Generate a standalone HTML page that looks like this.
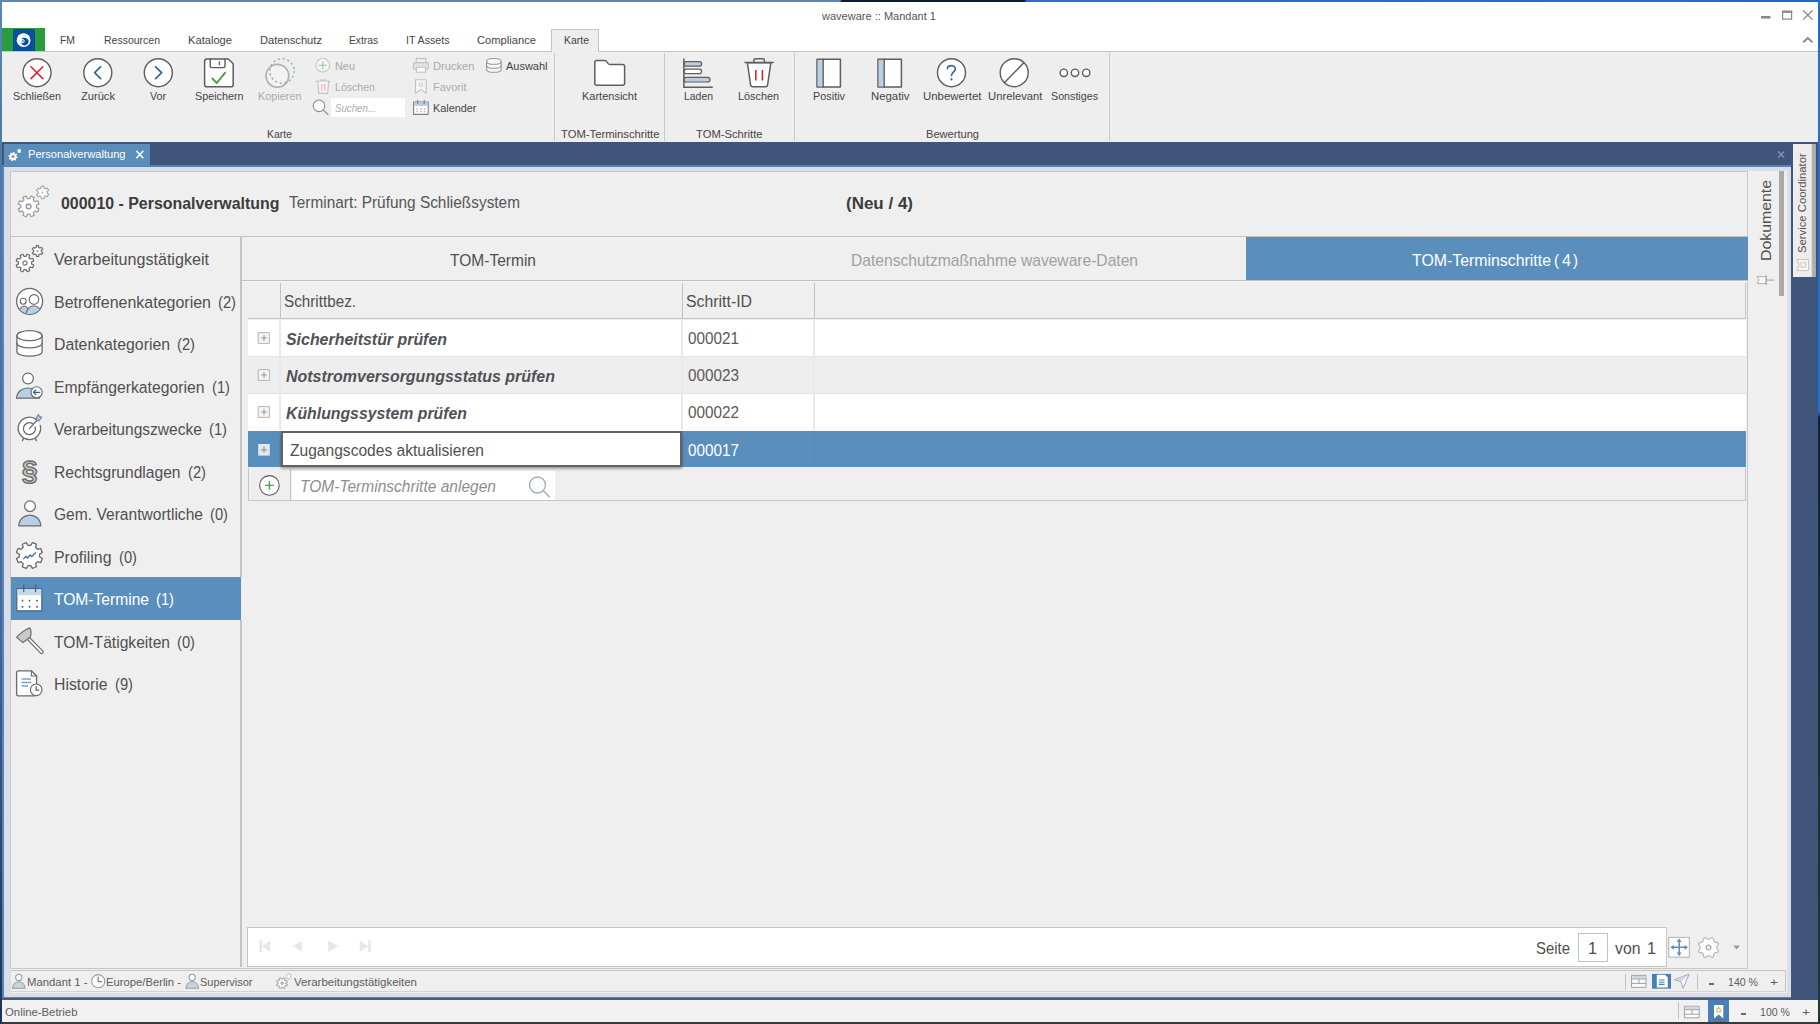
<!DOCTYPE html>
<html lang="de"><head><meta charset="utf-8"><title>waveware :: Mandant 1</title>
<style>
html,body{margin:0;padding:0;}
body{width:1820px;height:1024px;overflow:hidden;position:relative;background:#efefef;
 font-family:"Liberation Sans",sans-serif;}
.t{position:absolute;white-space:pre;line-height:1;display:block;}
.b{position:absolute;box-sizing:border-box;}
svg{position:absolute;overflow:visible;}
</style></head>
<body>
<!-- ===== window chrome ===== -->
<div class="b" style="left:0;top:0;width:1820px;height:52px;background:#ffffff"></div>
<div class="b" style="left:0;top:0;width:1820px;height:1.9px;background:linear-gradient(90deg,#5b86b5 0,#5b86b5 840px,#0d1b33 842px,#0d1b33 1024px,#2a6fd0 1027px,#1f69d0 100%)"></div>
<!-- logo -->
<div class="b" style="left:1.8px;top:28.3px;width:43.3px;height:23px;background:#2b9b3f"></div>
<div class="b" style="left:12.6px;top:28.6px;width:22.3px;height:22.7px;background:#08509e;border-radius:2px 2px 0 0"></div>
<!-- ribbon -->
<div class="b" style="left:0;top:52px;width:1820px;height:90px;background:#eeeeee"></div>
<div class="b" style="left:0;top:51px;width:1820px;height:1px;background:#c4c4c4"></div>
<!-- active menu tab -->
<div class="b" style="left:551px;top:29px;width:47.8px;height:23px;background:#eeeeee;border:1px solid #c4c4c4;border-bottom:none"></div>
<!-- ribbon group separators -->
<div class="b" style="left:554px;top:53px;width:1px;height:88px;background:#c9c9c9"></div>
<div class="b" style="left:664px;top:53px;width:1px;height:88px;background:#c9c9c9"></div>
<div class="b" style="left:794px;top:53px;width:1px;height:88px;background:#c9c9c9"></div>
<div class="b" style="left:1109px;top:53px;width:1px;height:88px;background:#c9c9c9"></div>
<!-- search box -->
<div class="b" style="left:330.5px;top:97.5px;width:74.5px;height:19.5px;background:#ffffff"></div>

<!-- ===== document area ===== -->
<div class="b" style="left:0;top:141.5px;width:1820px;height:858.1px;background:#40557a"></div>
<div class="b" style="left:2px;top:165px;width:1789px;height:834.6px;background:#3d5c8c"></div>
<div class="b" style="left:2px;top:165px;width:1789px;height:833px;background:#5585b6"></div>
<div class="b" style="left:3.5px;top:166.8px;width:1787.4px;height:830px;background:#dadfe7"></div>
<!-- document tab -->
<div class="b" style="left:4px;top:144px;width:146px;height:22px;background:#5b8dbb"></div>
<!-- inner -->
<div class="b" style="left:10px;top:171px;width:1776.5px;height:821.5px;background:#efefef"></div>
<!-- main panel -->
<div class="b" style="left:10px;top:171px;width:1738px;height:797.5px;border:1px solid #c6c6c6;background:#efefef"></div>
<div class="b" style="left:11px;top:236px;width:1736px;height:1px;background:#c2c2c2"></div>
<div class="b" style="left:240.4px;top:236px;width:1.4px;height:731px;background:#c4c4c4"></div>
<!-- selected nav -->
<div class="b" style="left:11px;top:577.2px;width:231px;height:42.4px;background:#5a8fbd;border-right:1px solid #efefef"></div>
<!-- tabs -->
<div class="b" style="left:242px;top:279.6px;width:1505px;height:1.2px;background:#c2c2c2"></div>
<div class="b" style="left:242px;top:280.8px;width:1505px;height:1.7px;background:#f6f4f2"></div>
<div class="b" style="left:1246px;top:236.5px;width:501.5px;height:43.1px;background:#5a8fbd"></div>

<!-- table -->
<div class="b" style="left:247.5px;top:282.5px;width:1498.5px;height:36.7px;border-bottom:1px solid #c6c6c6;border-right:1px solid #c6c6c6;background:#efefef"></div>
<div class="b" style="left:248px;top:320px;width:1498px;height:36px;background:#ffffff"></div>
<div class="b" style="left:248px;top:356px;width:1498px;height:1px;background:#e6e6e6"></div>
<div class="b" style="left:248px;top:357px;width:1498px;height:36.5px;background:#eeeeee"></div>
<div class="b" style="left:248px;top:393px;width:1498px;height:1px;background:#e2e2e2"></div>
<div class="b" style="left:248px;top:394px;width:1498px;height:36.5px;background:#ffffff"></div>
<div class="b" style="left:247.5px;top:430.5px;width:1498.5px;height:36.5px;background:#5a8fbd"></div>
<!-- column separators -->
<div class="b" style="left:279.5px;top:283px;width:1.5px;height:36px;background:#c2c2c2"></div>
<div class="b" style="left:681.5px;top:283px;width:1.5px;height:36px;background:#c2c2c2"></div>
<div class="b" style="left:813.5px;top:283px;width:1.5px;height:36px;background:#c2c2c2"></div>
<div class="b" style="left:279.4px;top:320px;width:1.6px;height:110px;background:#e9e9e9"></div>
<div class="b" style="left:681.2px;top:320px;width:1.6px;height:110px;background:#e9e9e9"></div>
<div class="b" style="left:813.2px;top:320px;width:1.6px;height:110px;background:#e9e9e9"></div>
<div class="b" style="left:814px;top:431px;width:1px;height:36px;background:#5388b6"></div>
<!-- add row -->
<div class="b" style="left:247.5px;top:468px;width:1498.5px;height:33px;border:1px solid #c6c6c6;border-top:none;background:#efefef"></div>
<div class="b" style="left:290px;top:469px;width:1px;height:32px;background:#c6c6c6"></div>
<div class="b" style="left:291.8px;top:471px;width:263.4px;height:29.2px;background:#ffffff"></div>

<!-- edit box -->
<div class="b" style="left:280.6px;top:431.4px;width:401px;height:35.2px;background:#ffffff;border:2px solid #626262;box-shadow:0 1.5px 3px rgba(0,0,0,.42)"></div>

<!-- pager -->
<div class="b" style="left:246.6px;top:927px;width:1420px;height:39.5px;border:1px solid #c6c6c6;background:#ffffff"></div>
<div class="b" style="left:1578.2px;top:933.1px;width:29.5px;height:29px;border:1px solid #c2c2c2;background:#ffffff"></div>

<!-- dokumente scroll thumb -->
<div class="b" style="left:1778.6px;top:171px;width:5.4px;height:125px;background:#a9a9a9"></div>

<!-- status bar 1 -->
<div class="b" style="left:10px;top:969.6px;width:1776px;height:22.4px;border:1px solid #c6c6c6;border-left-color:#dedede;border-bottom-color:#dccfcf;background:#efefef"></div>
<div class="b" style="left:1625px;top:974px;width:1px;height:16px;background:#c2c2c2"></div>
<div class="b" style="left:1697px;top:974px;width:1px;height:16px;background:#c2c2c2"></div>

<!-- service coordinator tab -->
<div class="b" style="left:1792.5px;top:144px;width:23.5px;height:133px;background:linear-gradient(90deg,#ededed 0,#ededed 79%,#b4b4b4 84%,#a8a8a8 100%)"></div>

<!-- bottom status bar -->
<div class="b" style="left:0;top:999.6px;width:1820px;height:22px;background:#f1f1f1"></div>
<div class="b" style="left:1677.5px;top:1002px;width:1px;height:17px;background:#c2c2c2"></div>
<div class="b" style="left:1708.4px;top:999.6px;width:20.6px;height:22.4px;background:#4a7fb5"></div>
<div class="b" style="left:0;top:1021.5px;width:1820px;height:2.5px;background:#3a3a3a"></div>

<div class="b" style="left:1708.6px;top:983px;width:5.2px;height:1.5px;background:#6a6a6a"></div>
<div class="b" style="left:1741px;top:1013.2px;width:4.8px;height:1.5px;background:#6a6a6a"></div>
<!-- window borders -->
<div class="b" style="left:0;top:0;width:1.9px;height:1024px;background:linear-gradient(180deg,#5b86b5 0,#4f79a6 140px,#46689a 60%,#223e66 90%,#1c3556 100%)"></div>
<div class="b" style="left:1817.5px;top:0;width:2.5px;height:1024px;background:linear-gradient(180deg,#2470d0 0,#2470d0 412px,#16242e 418px,#1b3a30 100%)"></div>

<svg width="1820" height="1024" viewBox="0 0 1820 1024" style="left:0;top:0" fill="none" stroke-linecap="round" stroke-linejoin="round">
<circle cx="23.6" cy="40.2" r="6.9" fill="#ffffff"/>
<path d="M21.2,39.2 C23.5,36.6 27.6,37.6 28.6,40.8 C28.9,43.4 26.8,45.6 24.2,45.4 C22.4,45.2 21.2,44 21.3,42.6 C23,43.8 25.2,42.6 24.6,40.6 C24,39 22.2,38.6 21.2,39.2Z" fill="#08509e"/>
<circle cx="22.8" cy="40.9" r="1.2" fill="#5aa9e6"/>
<rect x="1761" y="16" width="9.5" height="2.6" fill="#8a8a8a"/>
<rect x="1782.6" y="11.6" width="9" height="7.6" stroke="#8a8a8a" stroke-width="1.2"/><rect x="1782" y="10.5" width="10.2" height="2.4" fill="#8a8a8a"/>
<path d="M1803.4,10.8 L1812.2,19.4 M1812.2,10.8 L1803.4,19.4" stroke="#8a8a8a" stroke-width="1.3"/>
<path d="M1803.2,42.2 L1807.8,38 L1812.4,42.2" stroke="#8a8a8a" stroke-width="1.9" stroke-linejoin="miter" stroke-linecap="butt"/>
<circle cx="37" cy="72.7" r="14" fill="#fff" stroke="#5e5e5e" stroke-width="1.4"/>
<path d="M31,66.8 L42.8,78.6 M42.8,66.8 L31,78.6" stroke="#dc2633" stroke-width="1.6"/>
<circle cx="97.8" cy="72.7" r="14" fill="#fff" stroke="#5e5e5e" stroke-width="1.4"/>
<path d="M100.6,66.8 L94.6,72.7 L100.6,78.6" stroke="#2f6499" stroke-width="1.7"/>
<circle cx="158.3" cy="72.7" r="14" fill="#fff" stroke="#5e5e5e" stroke-width="1.4"/>
<path d="M155.6,66.8 L161.6,72.7 L155.6,78.6" stroke="#2f6499" stroke-width="1.7"/>
<path d="M206.8,59 H228.4 L233.2,63.8 V84.4 Q233.2,86.8 230.8,86.8 H206.8 Q204.6,86.8 204.6,84.4 V61.4 Q204.6,59 206.8,59Z" fill="#fff" stroke="#5e5e5e" stroke-width="1.5"/>
<path d="M210.2,59 V66 Q210.2,67.6 211.8,67.6 H223.4 Q225,67.6 225,66 V59" stroke="#5e5e5e" stroke-width="1.4"/>
<path d="M219.4,62 V64.6" stroke="#5e5e5e" stroke-width="1.4"/>
<path d="M212.4,78.6 L216.8,83 L225,72.8" stroke="#3fa535" stroke-width="1.9"/>
<circle cx="277.4" cy="75.8" r="11.4" fill="#f3f3f3" stroke="#b2b2b2" stroke-width="1.7"/>
<circle cx="282" cy="71" r="12.2" stroke="#9fadbd" stroke-width="1.5" stroke-dasharray="2.2 2.6" stroke-linecap="butt"/>
<circle cx="322.8" cy="65.3" r="6.8" fill="#f6f6f6" stroke="#c6c6c6" stroke-width="1.1"/>
<path d="M322.8,61.6 V69 M319.1,65.3 H326.5" stroke="#a4d3a0" stroke-width="1.3"/>
<path d="M316.6,81.4 H329.8 M320.6,81.4 V80 H325.8 V81.4" stroke="#c2c2c2" stroke-width="1.1"/>
<path d="M317.8,81.6 L318.8,93.4 H327.6 L328.6,81.6" fill="#f4f4f4" stroke="#c2c2c2" stroke-width="1.1"/>
<path d="M321.8,84.4 V90.4 M324.8,84.4 V90.4" stroke="#f0a3a8" stroke-width="1"/>
<circle cx="319" cy="105.8" r="5.8" fill="#fafafa" stroke="#8c8c8c" stroke-width="1.1"/>
<path d="M323.2,110 L328,114.4" stroke="#9a9a9a" stroke-width="1.4"/>
<rect x="416.2" y="58.6" width="9.6" height="4.4" fill="#f2f2f2" stroke="#c2c2c2" stroke-width="1.1"/>
<rect x="413.4" y="62.6" width="15" height="6.6" rx="1.2" fill="#e2e2e2" stroke="#c2c2c2" stroke-width="1.1"/>
<rect x="416.4" y="67.2" width="9.2" height="5" fill="#f8f8f8" stroke="#c2c2c2" stroke-width="1.1"/>
<path d="M415.4,79.8 H426.2 V93.2 L420.8,89.6 L415.4,93.2Z" fill="#f4f4f4" stroke="#c2c2c2" stroke-width="1.1"/>
<circle cx="420.8" cy="84.6" r="1.9" stroke="#c9c9c9" stroke-width="1"/>
<rect x="413.6" y="102" width="14.6" height="12.4" fill="#fff" stroke="#7c8289" stroke-width="1.1"/>
<rect x="414.2" y="102.6" width="13.4" height="3.4" fill="#b9cde0"/>
<path d="M417.6,100.2 V103.4 M424.2,100.2 V103.4" stroke="#7c8289" stroke-width="1.1"/>
<path d="M416.4,109 H418 M420.1,109 H421.7 M423.8,109 H425.4 M416.4,111.8 H418 M420.1,111.8 H421.7 M423.8,111.8 H425.4" stroke="#8da0b4" stroke-width="1.1" stroke-linecap="butt"/>
<path d="M486.6,61.4 V69.4 C486.6,73.2 501.2,73.2 501.2,69.4 V61.4" fill="#f8f8f8" stroke="#989898" stroke-width="1.1"/>
<ellipse cx="493.9" cy="61.4" rx="7.3" ry="2.9" fill="#f8f8f8" stroke="#989898" stroke-width="1.1"/>
<path d="M486.6,65.4 C486.6,69.2 501.2,69.2 501.2,65.4" stroke="#989898" stroke-width="1.1"/>
<path d="M596.8,60.4 H604.6 Q606,60.4 606.8,61.6 L608.2,63.6 Q608.8,64.4 610,64.4 H622.6 Q624.6,64.4 624.6,66.4 V83.2 Q624.6,85.2 622.6,85.2 H596.8 Q594.8,85.2 594.8,83.2 V62.4 Q594.8,60.4 596.8,60.4Z" fill="#fff" stroke="#5e5e5e" stroke-width="1.5"/>
<rect x="684" y="61.6" width="17.6" height="4.6" rx="2.2" fill="#b9cfe3" stroke="#5e5e5e" stroke-width="1.2"/>
<rect x="684" y="69.2" width="17.6" height="4.4" rx="2.2" fill="#fff" stroke="#5e5e5e" stroke-width="1.2"/>
<rect x="684" y="77.4" width="26" height="4.6" rx="2.2" fill="#b9cfe3" stroke="#5e5e5e" stroke-width="1.2"/>
<path d="M683.9,58.6 V87.2 H712.8" stroke="#5e5e5e" stroke-width="1.5" stroke-linecap="butt" stroke-linejoin="miter"/>
<path d="M747.4,62.8 L750.6,84.8 Q750.9,86.8 752.8,86.8 H765.4 Q767.3,86.8 767.6,84.8 L770.8,62.8Z" fill="#fff" stroke="#5e5e5e" stroke-width="1.5"/>
<path d="M745,62.6 H773.2 M753.8,62.4 V60.4 Q753.8,58.8 755.4,58.8 H762.8 Q764.4,58.8 764.4,60.4 V62.4" stroke="#5e5e5e" stroke-width="1.5"/>
<path d="M755.8,70 V80.4 M762.4,70 V80.4" stroke="#dc2633" stroke-width="1.6" stroke-linecap="butt"/>
<rect x="817" y="59.2" width="23.4" height="27.8" fill="#fff" stroke="#5e5e5e" stroke-width="1.5"/>
<rect x="817.7" y="59.9" width="5.2" height="26.4" fill="#b9cfe3"/><path d="M823.2,59.2 V87" stroke="#5e5e5e" stroke-width="1.4"/>
<rect x="878" y="59.2" width="23.4" height="27.8" fill="#fff" stroke="#5e5e5e" stroke-width="1.5"/>
<rect x="878.7" y="59.9" width="5.2" height="26.4" fill="#b9cfe3"/><path d="M884.2,59.2 V87" stroke="#5e5e5e" stroke-width="1.4"/>
<circle cx="951.5" cy="72.7" r="14" fill="#fff" stroke="#5e5e5e" stroke-width="1.4"/>
<path d="M947.4,68.8 C947.6,64.6 955.6,64.6 955.4,69 C955.2,71.8 951.5,72 951.5,75.6" stroke="#2f6499" stroke-width="1.6"/><circle cx="951.5" cy="79.4" r="1.1" fill="#2f6499"/>
<circle cx="1014.2" cy="72.7" r="14" fill="#fff" stroke="#5e5e5e" stroke-width="1.4"/>
<path d="M1004.6,82.6 L1023.8,62.8" stroke="#5e5e5e" stroke-width="1.5"/>
<circle cx="1063.8" cy="72.8" r="3.7" fill="#fff" stroke="#5e5e5e" stroke-width="1.4"/>
<circle cx="1075" cy="72.8" r="3.7" fill="#fff" stroke="#5e5e5e" stroke-width="1.4"/>
<circle cx="1086.2" cy="72.8" r="3.7" fill="#fff" stroke="#5e5e5e" stroke-width="1.4"/>
<path d="M16.44,155.93 L16.50,156.42 L17.60,156.80 L17.31,158.21 L16.15,158.13 L15.90,158.56 L15.60,158.94 L16.11,159.99 L14.91,160.78 L14.15,159.91 L13.67,160.04 L13.18,160.10 L12.80,161.20 L11.39,160.91 L11.47,159.75 L11.04,159.50 L10.66,159.20 L9.61,159.71 L8.82,158.51 L9.69,157.75 L9.56,157.27 L9.50,156.78 L8.40,156.40 L8.69,154.99 L9.85,155.07 L10.10,154.64 L10.40,154.26 L9.89,153.21 L11.09,152.42 L11.85,153.29 L12.33,153.16 L12.82,153.10 L13.20,152.00 L14.61,152.29 L14.53,153.45 L14.96,153.70 L15.34,154.00 L16.39,153.49 L17.18,154.69 L16.31,155.45Z" fill="#fff"/>
<circle cx="13" cy="156.6" r="1.5" fill="#b9826e"/>
<circle cx="19.2" cy="151" r="1.9" fill="#fff"/>
<path d="M136.7,151.2 L142.9,157.8 M142.9,151.2 L136.7,157.8" stroke="#fff" stroke-width="1.5"/>
<path d="M1778.4,151.8 L1783.8,157.4 M1783.8,151.8 L1778.4,157.4" stroke="#8b98b0" stroke-width="1.3"/>
<path d="M36.40,206.38 L36.33,207.48 L38.91,208.85 L37.65,211.91 L34.85,211.07 L34.13,211.90 L33.30,212.62 L34.16,215.42 L31.10,216.70 L29.72,214.12 L28.62,214.20 L27.52,214.13 L26.15,216.71 L23.09,215.45 L23.93,212.65 L23.10,211.93 L22.38,211.10 L19.58,211.96 L18.30,208.90 L20.88,207.52 L20.80,206.42 L20.87,205.32 L18.29,203.95 L19.55,200.89 L22.35,201.73 L23.07,200.90 L23.90,200.18 L23.04,197.38 L26.10,196.10 L27.48,198.68 L28.58,198.60 L29.68,198.67 L31.05,196.09 L34.11,197.35 L33.27,200.15 L34.10,200.87 L34.82,201.70 L37.62,200.84 L38.90,203.90 L36.32,205.28Z" fill="#fff" stroke="#9a9a9a" stroke-width="1.2"/>
<circle cx="28.6" cy="206.4" r="2.3" stroke="#93a3b6" stroke-width="1.6"/>
<path d="M47.10,192.29 L47.04,193.14 L48.73,194.23 L47.46,196.57 L45.62,195.74 L44.94,196.24 L44.18,196.61 L44.08,198.63 L41.42,198.69 L41.22,196.68 L40.44,196.35 L39.74,195.87 L37.95,196.79 L36.56,194.52 L38.20,193.35 L38.10,192.51 L38.16,191.66 L36.47,190.57 L37.74,188.23 L39.58,189.06 L40.26,188.56 L41.02,188.19 L41.12,186.17 L43.78,186.11 L43.98,188.12 L44.76,188.45 L45.46,188.93 L47.25,188.01 L48.64,190.28 L47.00,191.45Z" fill="#fff" stroke="#a6a6a6" stroke-width="1.1"/>
<circle cx="42.6" cy="192.4" r="1" fill="#a7b4c4"/>
<path d="M31.60,262.98 L31.54,263.91 L33.76,265.08 L32.69,267.68 L30.29,266.95 L29.68,267.65 L28.98,268.27 L29.72,270.66 L27.12,271.75 L25.95,269.53 L25.02,269.60 L24.09,269.54 L22.92,271.76 L20.32,270.69 L21.05,268.29 L20.35,267.68 L19.73,266.98 L17.34,267.72 L16.25,265.12 L18.47,263.95 L18.40,263.02 L18.46,262.09 L16.24,260.92 L17.31,258.32 L19.71,259.05 L20.32,258.35 L21.02,257.73 L20.28,255.34 L22.88,254.25 L24.05,256.47 L24.98,256.40 L25.91,256.46 L27.08,254.24 L29.68,255.31 L28.95,257.71 L29.65,258.32 L30.27,259.02 L32.66,258.28 L33.75,260.88 L31.53,262.05Z" fill="#fff" stroke="#6a6a6a" stroke-width="1.2"/>
<circle cx="25" cy="263" r="2" stroke="#7f8c9c" stroke-width="1.4"/>
<path d="M41.30,250.91 L41.25,251.62 L42.77,252.58 L41.67,254.58 L40.05,253.82 L39.48,254.25 L38.83,254.56 L38.77,256.35 L36.48,256.41 L36.34,254.62 L35.68,254.33 L35.09,253.93 L33.50,254.78 L32.31,252.82 L33.79,251.80 L33.70,251.09 L33.75,250.38 L32.23,249.42 L33.33,247.42 L34.95,248.18 L35.52,247.75 L36.17,247.44 L36.23,245.65 L38.52,245.59 L38.66,247.38 L39.32,247.67 L39.91,248.07 L41.50,247.22 L42.69,249.18 L41.21,250.20Z" fill="#fff" stroke="#6a6a6a" stroke-width="1.1"/>
<circle cx="37.5" cy="251" r="0.9" fill="#7f8c9c"/>
<clipPath id="cb"><circle cx="29.6" cy="301.3" r="12.6"/></clipPath>
<circle cx="29.6" cy="301.3" r="13" fill="#fff" stroke="#6a6a6a" stroke-width="1.3"/>
<g clip-path="url(#cb)"><path d="M18.6,316 C18.6,302.6 29.6,302.6 29.6,316Z" fill="#b9cfe3" stroke="#6a6a6a" stroke-width="1.1"/><path d="M26,316 C26,302.4 41.6,302.4 41.6,316Z" fill="#b9cfe3" stroke="#6a6a6a" stroke-width="1.1"/></g>
<circle cx="23.2" cy="301.2" r="3" fill="#fff" stroke="#6a6a6a" stroke-width="1.1"/><circle cx="34" cy="299.4" r="4.8" fill="#fff" stroke="#6a6a6a" stroke-width="1.1"/>
<path d="M16.9,335.7 V351.4 C16.9,357.8 42.1,357.8 42.1,351.4 V335.7" fill="#fff" stroke="#6a6a6a" stroke-width="1.3"/>
<ellipse cx="29.5" cy="335.7" rx="12.6" ry="5" fill="#fff" stroke="#6a6a6a" stroke-width="1.3"/>
<path d="M16.9,343 C16.9,349.4 42.1,349.4 42.1,343" stroke="#6a6a6a" stroke-width="1.3"/>
<circle cx="28" cy="378.5" r="5.4" fill="#fff" stroke="#6a6a6a" stroke-width="1.2"/>
<path d="M16.6,398.2 C17.6,384.6 38.4,384.6 39.4,398.2Z" fill="#b9cfe3" stroke="#6a6a6a" stroke-width="1.2"/>
<circle cx="36.6" cy="392.3" r="5.6" fill="#fff" stroke="#6a6a6a" stroke-width="1.1"/>
<path d="M39.8,392.3 H33.6 M35.8,390 L33.4,392.3 L35.8,394.6" stroke="#2f6499" stroke-width="1.2"/>
<path d="M36.4,419.6 A11.2,11.2 0 1 0 40.2,425.4" fill="#fff" stroke="#6a6a6a" stroke-width="1.3"/>
<path d="M32.4,423.4 A6,6 0 1 0 35.2,427" stroke="#6a6a6a" stroke-width="1.3"/>
<path d="M29.4,428.6 L38,419.2" stroke="#6a6a6a" stroke-width="1.3"/>
<path d="M36.2,417.6 L38.6,414.2 L39.4,416.6 L41.8,417 L39.4,420.8 L36.8,420.6Z" fill="#a9c3dc" stroke="#6a6a6a" stroke-width="0.9"/>
<path d="M23.4,438.6 L22.4,440.6 M35.4,438.6 L36.4,440.6" stroke="#6a6a6a" stroke-width="1.3"/>
<circle cx="30" cy="506.2" r="5.4" fill="#fff" stroke="#6a6a6a" stroke-width="1.2"/>
<path d="M18.8,525.8 C19.6,511.6 40,511.6 40.8,525.8Z" fill="#b9cfe3" stroke="#6a6a6a" stroke-width="1.3"/>
<path d="M39.60,555.47 L39.51,556.83 L42.36,558.47 L40.70,562.51 L37.53,561.67 L36.63,562.69 L35.61,563.59 L36.47,566.77 L32.44,568.45 L30.79,565.61 L29.43,565.70 L28.07,565.61 L26.43,568.46 L22.39,566.80 L23.23,563.63 L22.21,562.73 L21.31,561.71 L18.13,562.57 L16.45,558.54 L19.29,556.89 L19.20,555.53 L19.29,554.17 L16.44,552.53 L18.10,548.49 L21.27,549.33 L22.17,548.31 L23.19,547.41 L22.33,544.23 L26.36,542.55 L28.01,545.39 L29.37,545.30 L30.73,545.39 L32.37,542.54 L36.41,544.20 L35.57,547.37 L36.59,548.27 L37.49,549.29 L40.67,548.43 L42.35,552.46 L39.51,554.11Z" fill="#fff" stroke="#6a6a6a" stroke-width="1.3"/>
<path d="M23.6,558.6 L26,556.2 L27.6,558 L30.2,555 L31.8,556.6 L35.6,552.8" stroke="#2f6da8" stroke-width="1.3"/>
<rect x="16.8" y="588.6" width="25" height="22.2" fill="#fff" stroke="#46648a" stroke-width="1.2"/>
<rect x="17.4" y="589.2" width="23.8" height="6" fill="#c5d8ea"/>
<path d="M23.7,584.8 V591.6 M35.6,584.8 V591.6" stroke="#46648a" stroke-width="1.3"/>
<rect x="21.599999999999998" y="599.8000000000001" width="1.7" height="1.7" fill="#46648a"/>
<rect x="28.7" y="599.8000000000001" width="1.7" height="1.7" fill="#46648a"/>
<rect x="36.1" y="599.8000000000001" width="1.7" height="1.7" fill="#46648a"/>
<rect x="21.599999999999998" y="606.0" width="1.7" height="1.7" fill="#46648a"/>
<rect x="28.7" y="606.0" width="1.7" height="1.7" fill="#46648a"/>
<rect x="36.1" y="606.0" width="1.7" height="1.7" fill="#46648a"/>
<path d="M28.4,638.4 L41.6,652" stroke="#6a6a6a" stroke-width="4.2"/><path d="M28.4,638.4 L41.6,652" stroke="#fafafa" stroke-width="1.9"/>
<path d="M16.6,637.4 C20,633.6 25.4,629.6 29.8,627.8 C31.2,629.2 31.4,634.2 30.2,637.2 L23,642.6Z" fill="#c9c9c9" stroke="#6a6a6a" stroke-width="1.2"/>
<path d="M18.4,670.8 H31.4 L36.6,676 V693.6 Q36.6,695.8 34.4,695.8 H18.4 Q16.6,695.8 16.6,693.8 V672.8 Q16.6,670.8 18.4,670.8Z" fill="#fff" stroke="#6a6a6a" stroke-width="1.3"/>
<path d="M31.4,670.8 V676 H36.6" stroke="#6a6a6a" stroke-width="1.1"/>
<path d="M21.6,679 H31 M21.6,682.5 H31 M21.6,686 H28" stroke="#77a2cc" stroke-width="1.4" stroke-linecap="butt"/>
<circle cx="36.2" cy="689.8" r="5.8" fill="#fff" stroke="#6a6a6a" stroke-width="1.2"/>
<path d="M36.2,686.6 V690.2 H38.8" stroke="#3d6fa3" stroke-width="1.3"/>
<rect x="258.6" y="332.6" width="10.8" height="10.8" fill="#f4f4f4" stroke="#b4b4b4" stroke-width="1"/>
<path d="M261.2,338 H266.8 M264,335.2 V340.8" stroke="#9c9c9c" stroke-width="1.2" stroke-linecap="butt"/>
<rect x="258.6" y="369.6" width="10.8" height="10.8" fill="#f4f4f4" stroke="#b4b4b4" stroke-width="1"/>
<path d="M261.2,375 H266.8 M264,372.2 V377.8" stroke="#9c9c9c" stroke-width="1.2" stroke-linecap="butt"/>
<rect x="258.6" y="406.6" width="10.8" height="10.8" fill="#f4f4f4" stroke="#b4b4b4" stroke-width="1"/>
<path d="M261.2,412 H266.8 M264,409.2 V414.8" stroke="#9c9c9c" stroke-width="1.2" stroke-linecap="butt"/>
<rect x="258.2" y="444.0" width="11.6" height="11.6" fill="#e3e8ee"/>
<path d="M261,449.8 H267 M264,446.8 V452.8" stroke="#9a9a9a" stroke-width="1.3" stroke-linecap="butt"/>
<circle cx="269.4" cy="485.4" r="9.8" fill="#fff" stroke="#5a5a5a" stroke-width="1.1"/>
<path d="M269.4,481 V489.8 M265,485.4 H273.8" stroke="#4aa84a" stroke-width="1.4" stroke-linecap="butt"/>
<circle cx="537.5" cy="485" r="8" fill="#fbfcfd" stroke="#a4adb6" stroke-width="1.4"/>
<path d="M543.4,490.8 L549.2,496.6" stroke="#b0b0b0" stroke-width="1.6"/>
<path d="M259.4,940.4 H261.9 V952 H259.4Z M270.2,940.4 V952 L261.9,946.2Z" fill="#e7e7e7"/>
<path d="M301.8,940.6 V951.8 L293,946.2Z" fill="#e7e7e7"/>
<path d="M328.2,940.6 V951.8 L338.4,946.2Z" fill="#e7e7e7"/>
<path d="M359.8,940.4 V952 L368.2,946.2Z M368.2,940.4 H370.8 V952 H368.2Z" fill="#e7e7e7"/>
<rect x="1669.1" y="937.4" width="20.2" height="19.8" fill="#fdfdfd" stroke="#b2b2b2" stroke-width="1"/>
<path d="M1679.2,939.6 V955.2 M1671.6,947.3 H1687" stroke="#5b8dbb" stroke-width="1.5" stroke-linecap="butt"/>
<path d="M1679.2,938.6 L1681.6,942 H1676.8Z M1679.2,956 L1681.6,952.6 H1676.8Z M1670.4,947.3 L1673.8,944.9 V949.7Z M1688,947.3 L1684.6,944.9 V949.7Z" fill="#5b8dbb"/>
<path d="M1718.49,951.61 C1718.09,952.57 1715.29,952.31 1714.31,953.28 C1713.34,954.26 1713.63,957.06 1712.66,957.47 C1711.69,957.87 1709.90,955.70 1708.52,955.70 C1707.14,955.70 1705.36,957.89 1704.39,957.49 C1703.43,957.09 1703.69,954.29 1702.72,953.31 C1701.74,952.34 1698.94,952.63 1698.53,951.66 C1698.13,950.69 1700.30,948.90 1700.30,947.52 C1700.30,946.14 1698.11,944.36 1698.51,943.39 C1698.91,942.43 1701.71,942.69 1702.69,941.72 C1703.66,940.74 1703.37,937.94 1704.34,937.53 C1705.31,937.13 1707.10,939.30 1708.48,939.30 C1709.86,939.30 1711.64,937.11 1712.61,937.51 C1713.57,937.91 1713.31,940.71 1714.28,941.69 C1715.26,942.66 1718.06,942.37 1718.47,943.34 C1718.87,944.31 1716.70,946.10 1716.70,947.48 C1716.70,948.86 1718.89,950.64 1718.49,951.61Z" fill="#fdfdfd" stroke="#bcbcbc" stroke-width="1.3"/>
<circle cx="1708.5" cy="947.5" r="2.3" stroke="#a9b5c4" stroke-width="1.5"/>
<path d="M1733.2,945.4 H1740 L1736.6,949.4Z" fill="#9a9a9a"/>
<path d="M1757.4,276.6 H1766 V283.6 H1757.4 L1758.8,280.1Z" fill="#f8f8f8" stroke="#b0b0b0" stroke-width="1"/><path d="M1766,280.1 H1774" stroke="#b0b0b0" stroke-width="1.2"/><path d="M1766.4,275.6 V284.6" stroke="#b0b0b0" stroke-width="1.2"/>
<path d="M1797.2,259.6 H1808.6 V270.6 H1797.2 L1799,265.1Z" fill="#f6f6f6" stroke="#c4c4c4" stroke-width="1"/><rect x="1801.4" y="262.6" width="4.2" height="4.6" stroke="#d2c79a" stroke-width="0.9"/>
<circle cx="18.8" cy="977.4" r="3.1" fill="#fafafa" stroke="#9c9c9c" stroke-width="1.1"/>
<path d="M12.4,988.2 C13.0,979.6 24.6,979.6 25.200000000000003,988.2Z" fill="#c3d3e0" stroke="#9c9c9c" stroke-width="1.1"/>
<circle cx="192.2" cy="977.4" r="3.1" fill="#fafafa" stroke="#9c9c9c" stroke-width="1.1"/>
<path d="M185.79999999999998,988.2 C186.39999999999998,979.6 198.0,979.6 198.6,988.2Z" fill="#c3d3e0" stroke="#9c9c9c" stroke-width="1.1"/>
<circle cx="98.2" cy="981.2" r="6.6" fill="#fafafa" stroke="#9c9c9c" stroke-width="1.1"/><path d="M98.2,977.2 V981.6 H101.6" stroke="#858585" stroke-width="1.3"/>
<path d="M286.00,983.19 L285.96,983.75 L287.45,984.49 L286.78,986.11 L285.21,985.59 L284.84,986.02 L284.41,986.39 L284.94,987.97 L283.32,988.64 L282.57,987.16 L282.01,987.20 L281.45,987.16 L280.71,988.65 L279.09,987.98 L279.61,986.41 L279.18,986.04 L278.81,985.61 L277.23,986.14 L276.56,984.52 L278.04,983.77 L278.00,983.21 L278.04,982.65 L276.55,981.91 L277.22,980.29 L278.79,980.81 L279.16,980.38 L279.59,980.01 L279.06,978.43 L280.68,977.76 L281.43,979.24 L281.99,979.20 L282.55,979.24 L283.29,977.75 L284.91,978.42 L284.39,979.99 L284.82,980.36 L285.19,980.79 L286.77,980.26 L287.44,981.88 L285.96,982.63Z" fill="#fafafa" stroke="#9c9c9c" stroke-width="1"/>
<circle cx="282" cy="983.2" r="1.2" stroke="#9c9c9c" stroke-width="1"/>
<path d="M290.60,976.35 L290.57,976.73 L291.47,977.26 L290.88,978.35 L289.94,977.88 L289.64,978.11 L289.30,978.27 L289.29,979.32 L288.05,979.35 L287.99,978.30 L287.64,978.16 L287.33,977.94 L286.42,978.46 L285.77,977.39 L286.64,976.82 L286.60,976.45 L286.63,976.07 L285.73,975.54 L286.32,974.45 L287.26,974.92 L287.56,974.69 L287.90,974.53 L287.91,973.48 L289.15,973.45 L289.21,974.50 L289.56,974.64 L289.87,974.86 L290.78,974.34 L291.43,975.41 L290.56,975.98Z" fill="#fafafa" stroke="#c2c2c2" stroke-width="0.9"/>
<rect x="1632" y="975.4" width="14" height="12" fill="#fcfcfc" stroke="#a0a0a0" stroke-width="1"/>
<rect x="1632.5" y="975.9" width="13" height="2.6" fill="#c9d8e6"/>
<path d="M1632,979.0 H1646 M1632,983.4 H1646 M1639.0,979.0 V983.4" stroke="#a0a0a0" stroke-width="1" stroke-linecap="butt"/>
<rect x="1652" y="973.9" width="19" height="14.8" fill="#4a7fb5"/>
<path d="M1656.8,974.8 H1665 L1667.8,977.4 V987.6 H1656.8Z" fill="#fff"/>
<path d="M1659,980 H1664.6 M1659,982.2 H1664.6 M1659,984.4 H1664.6" stroke="#4a7fb5" stroke-width="1.1" stroke-linecap="butt"/>
<path d="M1674.8,979.6 L1689,974.2 L1683.2,988.4 L1681,982 Z" fill="#f7f7f7" stroke="#a6a6a6" stroke-width="1"/><path d="M1675.8,979.6 L1688,975 L1681.2,981.8Z" fill="#c9dbea"/>
<rect x="1684.8" y="1006.2" width="14.4" height="11.6" fill="#fcfcfc" stroke="#a0a0a0" stroke-width="1"/>
<rect x="1685.3" y="1006.7" width="13.4" height="2.6" fill="#c9d8e6"/>
<path d="M1684.8,1009.8000000000001 H1699.2 M1684.8,1014.2 H1699.2 M1692.0,1009.8000000000001 V1014.2" stroke="#a0a0a0" stroke-width="1" stroke-linecap="butt"/>
<path d="M1714,1005 H1723.3 V1018.4 L1718.65,1014.6 L1714,1018.4Z" fill="#fff"/>
<path d="M1718.65,1007.2 L1719.5,1009 L1721.4,1009.2 L1720,1010.5 L1720.4,1012.4 L1718.65,1011.4 L1716.9,1012.4 L1717.3,1010.5 L1715.9,1009.2 L1717.8,1009Z" stroke="#c9a64a" stroke-width="0.9"/>
<text x="29.8" y="480.4" text-anchor="middle" font-family="Liberation Sans, sans-serif" font-size="28.5" font-weight="700" fill="#cfcfcf" stroke="#707070" stroke-width="1.5">§</text>
</svg>
<span class="t" style="left:822px;top:10.84px;font-size:11.8px;font-weight:400;font-style:normal;color:#555;transform-origin:0 0;transform:scaleX(0.9347);">waveware :: Mandant 1</span>
<span class="t" style="left:60px;top:35.04px;font-size:11.8px;font-weight:400;font-style:normal;color:#444444;transform-origin:0 0;transform:scaleX(0.8799);">FM</span>
<span class="t" style="left:104px;top:35.04px;font-size:11.8px;font-weight:400;font-style:normal;color:#444444;transform-origin:0 0;transform:scaleX(0.8896);">Ressourcen</span>
<span class="t" style="left:188px;top:35.04px;font-size:11.8px;font-weight:400;font-style:normal;color:#444444;transform-origin:0 0;transform:scaleX(0.9446);">Kataloge</span>
<span class="t" style="left:260px;top:35.04px;font-size:11.8px;font-weight:400;font-style:normal;color:#444444;transform-origin:0 0;transform:scaleX(0.9454);">Datenschutz</span>
<span class="t" style="left:349px;top:35.04px;font-size:11.8px;font-weight:400;font-style:normal;color:#444444;transform-origin:0 0;transform:scaleX(0.8673);">Extras</span>
<span class="t" style="left:405.5px;top:35.04px;font-size:11.8px;font-weight:400;font-style:normal;color:#444444;transform-origin:0 0;transform:scaleX(0.9004);">IT Assets</span>
<span class="t" style="left:477px;top:35.04px;font-size:11.8px;font-weight:400;font-style:normal;color:#444444;transform-origin:0 0;transform:scaleX(0.9471);">Compliance</span>
<span class="t" style="left:564px;top:35.04px;font-size:11.8px;font-weight:400;font-style:normal;color:#444444;transform-origin:0 0;transform:scaleX(0.8864);">Karte</span>
<span class="t" style="left:13px;top:91.24px;font-size:11.8px;font-weight:400;font-style:normal;color:#444444;transform-origin:0 0;transform:scaleX(0.9148);">Schließen</span>
<span class="t" style="left:80.5px;top:91.24px;font-size:11.8px;font-weight:400;font-style:normal;color:#444444;transform-origin:0 0;transform:scaleX(0.9428);">Zurück</span>
<span class="t" style="left:150px;top:91.24px;font-size:11.8px;font-weight:400;font-style:normal;color:#444444;transform-origin:0 0;transform:scaleX(0.9030);">Vor</span>
<span class="t" style="left:194.5px;top:91.24px;font-size:11.8px;font-weight:400;font-style:normal;color:#444444;transform-origin:0 0;transform:scaleX(0.9129);">Speichern</span>
<span class="t" style="left:257.5px;top:91.24px;font-size:11.8px;font-weight:400;font-style:normal;color:#ababab;transform-origin:0 0;transform:scaleX(0.9209);">Kopieren</span>
<span class="t" style="left:582px;top:91.24px;font-size:11.8px;font-weight:400;font-style:normal;color:#444444;transform-origin:0 0;transform:scaleX(0.9320);">Kartensicht</span>
<span class="t" style="left:684px;top:91.24px;font-size:11.8px;font-weight:400;font-style:normal;color:#444444;transform-origin:0 0;transform:scaleX(0.8838);">Laden</span>
<span class="t" style="left:738px;top:91.24px;font-size:11.8px;font-weight:400;font-style:normal;color:#444444;transform-origin:0 0;transform:scaleX(0.9191);">Löschen</span>
<span class="t" style="left:812.5px;top:91.24px;font-size:11.8px;font-weight:400;font-style:normal;color:#444444;transform-origin:0 0;transform:scaleX(0.9209);">Positiv</span>
<span class="t" style="left:870.5px;top:91.24px;font-size:11.8px;font-weight:400;font-style:normal;color:#444444;transform-origin:0 0;transform:scaleX(0.9625);">Negativ</span>
<span class="t" style="left:922.5px;top:91.24px;font-size:11.8px;font-weight:400;font-style:normal;color:#444444;transform-origin:0 0;transform:scaleX(0.9697);">Unbewertet</span>
<span class="t" style="left:987.5px;top:91.24px;font-size:11.8px;font-weight:400;font-style:normal;color:#444444;transform-origin:0 0;transform:scaleX(0.9551);">Unrelevant</span>
<span class="t" style="left:1051px;top:91.24px;font-size:11.8px;font-weight:400;font-style:normal;color:#444444;transform-origin:0 0;transform:scaleX(0.9071);">Sonstiges</span>
<span class="t" style="left:335px;top:60.84px;font-size:11.8px;font-weight:400;font-style:normal;color:#ababab;transform-origin:0 0;transform:scaleX(0.9235);">Neu</span>
<span class="t" style="left:335px;top:81.84px;font-size:11.8px;font-weight:400;font-style:normal;color:#ababab;transform-origin:0 0;transform:scaleX(0.8967);">Löschen</span>
<span class="t" style="left:335px;top:102.84px;font-size:11.8px;font-weight:400;font-style:italic;color:#ababab;transform-origin:0 0;transform:scaleX(0.8226);">Suchen...</span>
<span class="t" style="left:432.5px;top:60.84px;font-size:11.8px;font-weight:400;font-style:normal;color:#ababab;transform-origin:0 0;transform:scaleX(0.9445);">Drucken</span>
<span class="t" style="left:432.5px;top:81.84px;font-size:11.8px;font-weight:400;font-style:normal;color:#ababab;transform-origin:0 0;transform:scaleX(0.9289);">Favorit</span>
<span class="t" style="left:432.5px;top:102.84px;font-size:11.8px;font-weight:400;font-style:normal;color:#444444;transform-origin:0 0;transform:scaleX(0.9209);">Kalender</span>
<span class="t" style="left:505.5px;top:60.84px;font-size:11.8px;font-weight:400;font-style:normal;color:#444444;transform-origin:0 0;transform:scaleX(0.9306);">Auswahl</span>
<span class="t" style="left:267px;top:129.14px;font-size:11.8px;font-weight:400;font-style:normal;color:#444444;transform-origin:0 0;transform:scaleX(0.8864);">Karte</span>
<span class="t" style="left:560.5px;top:129.14px;font-size:11.8px;font-weight:400;font-style:normal;color:#444444;transform-origin:0 0;transform:scaleX(0.9531);">TOM-Terminschritte</span>
<span class="t" style="left:696px;top:129.14px;font-size:11.8px;font-weight:400;font-style:normal;color:#444444;transform-origin:0 0;transform:scaleX(0.9511);">TOM-Schritte</span>
<span class="t" style="left:926px;top:129.14px;font-size:11.8px;font-weight:400;font-style:normal;color:#444444;transform-origin:0 0;transform:scaleX(0.9396);">Bewertung</span>
<span class="t" style="left:27.5px;top:148.64px;font-size:11.8px;font-weight:400;font-style:normal;color:#ffffff;transform-origin:0 0;transform:scaleX(0.9410);">Personalverwaltung</span>
<span class="t" style="left:60.5px;top:196.18px;font-size:15.6px;font-weight:700;font-style:normal;color:#3c3c3c;transform-origin:0 0;transform:scaleX(1.0206);">000010 - Personalverwaltung</span>
<span class="t" style="left:289px;top:195px;font-size:15.5px;font-weight:400;font-style:normal;color:#555;transform-origin:0 13px;transform:scale(0.9932,1.1);">Terminart: Prüfung Schließsystem</span>
<span class="t" style="left:846px;top:196.18px;font-size:15.6px;font-weight:700;font-style:normal;color:#3c3c3c;transform-origin:0 0;transform:scaleX(1.0892);">(Neu / 4)</span>
<span class="t" style="left:54px;top:252px;font-size:15.5px;font-weight:400;font-style:normal;color:#505050;transform-origin:0 13px;transform:scale(1.0397,1.1);">Verarbeitungstätigkeit</span>
<span class="t" style="left:54px;top:295px;font-size:15.5px;font-weight:400;font-style:normal;color:#505050;transform-origin:0 13px;transform:scale(1.0312,1.1);">Betroffenenkategorien</span>
<span class="t" style="left:218px;top:295px;font-size:15.5px;font-weight:400;font-style:normal;color:#505050;transform-origin:0 13px;transform:scale(0.9497,1.1);">(2)</span>
<span class="t" style="left:54px;top:337px;font-size:15.5px;font-weight:400;font-style:normal;color:#505050;transform-origin:0 13px;transform:scale(1.0198,1.1);">Datenkategorien</span>
<span class="t" style="left:177px;top:337px;font-size:15.5px;font-weight:400;font-style:normal;color:#505050;transform-origin:0 13px;transform:scale(0.9497,1.1);">(2)</span>
<span class="t" style="left:54px;top:380px;font-size:15.5px;font-weight:400;font-style:normal;color:#505050;transform-origin:0 13px;transform:scale(1.0154,1.1);">Empfängerkategorien</span>
<span class="t" style="left:211.5px;top:380px;font-size:15.5px;font-weight:400;font-style:normal;color:#505050;transform-origin:0 13px;transform:scale(0.9497,1.1);">(1)</span>
<span class="t" style="left:54px;top:422px;font-size:15.5px;font-weight:400;font-style:normal;color:#505050;transform-origin:0 13px;transform:scale(1.0045,1.1);">Verarbeitungszwecke</span>
<span class="t" style="left:209px;top:422px;font-size:15.5px;font-weight:400;font-style:normal;color:#505050;transform-origin:0 13px;transform:scale(0.9497,1.1);">(1)</span>
<span class="t" style="left:54px;top:465px;font-size:15.5px;font-weight:400;font-style:normal;color:#505050;transform-origin:0 13px;transform:scale(1.0055,1.1);">Rechtsgrundlagen</span>
<span class="t" style="left:187.5px;top:465px;font-size:15.5px;font-weight:400;font-style:normal;color:#505050;transform-origin:0 13px;transform:scale(0.9497,1.1);">(2)</span>
<span class="t" style="left:54px;top:507px;font-size:15.5px;font-weight:400;font-style:normal;color:#505050;transform-origin:0 13px;transform:scale(1.0055,1.1);">Gem. Verantwortliche</span>
<span class="t" style="left:210px;top:507px;font-size:15.5px;font-weight:400;font-style:normal;color:#505050;transform-origin:0 13px;transform:scale(0.9497,1.1);">(0)</span>
<span class="t" style="left:54px;top:550px;font-size:15.5px;font-weight:400;font-style:normal;color:#505050;transform-origin:0 13px;transform:scale(1.0268,1.1);">Profiling</span>
<span class="t" style="left:118.5px;top:550px;font-size:15.5px;font-weight:400;font-style:normal;color:#505050;transform-origin:0 13px;transform:scale(0.9497,1.1);">(0)</span>
<span class="t" style="left:54px;top:592px;font-size:15.5px;font-weight:400;font-style:normal;color:#ffffff;transform-origin:0 13px;transform:scale(1.0058,1.1);">TOM-Termine</span>
<span class="t" style="left:156px;top:592px;font-size:15.5px;font-weight:400;font-style:normal;color:#ffffff;transform-origin:0 13px;transform:scale(0.9497,1.1);">(1)</span>
<span class="t" style="left:54px;top:635px;font-size:15.5px;font-weight:400;font-style:normal;color:#505050;transform-origin:0 13px;transform:scale(1.0075,1.1);">TOM-Tätigkeiten</span>
<span class="t" style="left:177px;top:635px;font-size:15.5px;font-weight:400;font-style:normal;color:#505050;transform-origin:0 13px;transform:scale(0.9497,1.1);">(0)</span>
<span class="t" style="left:54px;top:677px;font-size:15.5px;font-weight:400;font-style:normal;color:#505050;transform-origin:0 13px;transform:scale(1.0181,1.1);">Historie</span>
<span class="t" style="left:114.5px;top:677px;font-size:15.5px;font-weight:400;font-style:normal;color:#505050;transform-origin:0 13px;transform:scale(0.9497,1.1);">(9)</span>
<span class="t" style="left:450px;top:252.09px;font-size:16.2px;font-weight:400;font-style:normal;color:#505050;transform-origin:0 0;transform:scaleX(0.9594);">TOM-Termin</span>
<span class="t" style="left:851px;top:252.09px;font-size:16.2px;font-weight:400;font-style:normal;color:#a0a0a0;transform-origin:0 0;transform:scaleX(0.9637);">Datenschutzmaßnahme waveware-Daten</span>
<span class="t" style="left:1412px;top:252.09px;font-size:16.2px;font-weight:400;font-style:normal;color:#ffffff;transform-origin:0 0;transform:scaleX(0.9802);">TOM-Terminschritte</span>
<span class="t" style="left:1554px;top:252.09px;font-size:16.2px;font-weight:400;font-style:normal;color:#ffffff;transform-origin:0 0;transform:scaleX(0.9275);">(</span>
<span class="t" style="left:1562px;top:252.09px;font-size:16.2px;font-weight:400;font-style:normal;color:#ffffff;transform-origin:0 0;transform:scaleX(0.9983);">4</span>
<span class="t" style="left:1573px;top:252.09px;font-size:16.2px;font-weight:400;font-style:normal;color:#ffffff;transform-origin:0 0;transform:scaleX(0.9275);">)</span>
<span class="t" style="left:284px;top:294px;font-size:15.5px;font-weight:400;font-style:normal;color:#505050;transform-origin:0 13px;transform:scale(0.9831,1.1);">Schrittbez.</span>
<span class="t" style="left:686px;top:294px;font-size:15.5px;font-weight:400;font-style:normal;color:#505050;transform-origin:0 13px;transform:scale(1.0218,1.1);">Schritt-ID</span>
<span class="t" style="left:286px;top:331.53px;font-size:15.7px;font-weight:700;font-style:italic;color:#515156;transform-origin:0 0;transform:scaleX(1.0148);">Sicherheitstür prüfen</span>
<span class="t" style="left:286px;top:368.53px;font-size:15.7px;font-weight:700;font-style:italic;color:#515156;transform-origin:0 0;transform:scaleX(1.0185);">Notstromversorgungsstatus prüfen</span>
<span class="t" style="left:286px;top:405.53px;font-size:15.7px;font-weight:700;font-style:italic;color:#515156;transform-origin:0 0;transform:scaleX(1.0080);">Kühlungssystem prüfen</span>
<span class="t" style="left:688px;top:331.38px;font-size:15.8px;font-weight:400;font-style:normal;color:#5a5a5a;transform-origin:0 0;transform:scaleX(0.9674);">000021</span>
<span class="t" style="left:688px;top:368.38px;font-size:15.8px;font-weight:400;font-style:normal;color:#5a5a5a;transform-origin:0 0;transform:scaleX(0.9674);">000023</span>
<span class="t" style="left:688px;top:405.38px;font-size:15.8px;font-weight:400;font-style:normal;color:#5a5a5a;transform-origin:0 0;transform:scaleX(0.9674);">000022</span>
<span class="t" style="left:688px;top:442.78px;font-size:15.8px;font-weight:400;font-style:normal;color:#ffffff;transform-origin:0 0;transform:scaleX(0.9674);">000017</span>
<span class="t" style="left:290px;top:443px;font-size:15.5px;font-weight:400;font-style:normal;color:#505050;transform-origin:0 13px;transform:scale(1.0051,1.1);">Zugangscodes aktualisieren</span>
<span class="t" style="left:300px;top:479px;font-size:15.5px;font-weight:400;font-style:italic;color:#8e8e8e;transform-origin:0 13px;transform:scale(1.0022,1.1);">TOM-Terminschritte anlegen</span>
<span class="t" style="left:1536px;top:941.28px;font-size:16px;font-weight:400;font-style:normal;color:#505050;transform-origin:0 0;transform:scaleX(0.9323);">Seite</span>
<span class="t" style="left:1588px;top:941.28px;font-size:16px;font-weight:400;font-style:normal;color:#505050;transform-origin:0 0;transform:scaleX(1.0105);">1</span>
<span class="t" style="left:1615px;top:941.28px;font-size:16px;font-weight:400;font-style:normal;color:#505050;transform-origin:0 0;transform:scaleX(0.9885);">von</span>
<span class="t" style="left:1647px;top:941.28px;font-size:16px;font-weight:400;font-style:normal;color:#505050;transform-origin:0 0;transform:scaleX(1.0105);">1</span>
<span class="t" style="left:27px;top:976.84px;font-size:11.8px;font-weight:400;font-style:normal;color:#5c5c5c;transform-origin:0 0;transform:scaleX(0.9608);">Mandant 1 -</span>
<span class="t" style="left:106px;top:976.84px;font-size:11.8px;font-weight:400;font-style:normal;color:#5c5c5c;transform-origin:0 0;transform:scaleX(0.9531);">Europe/Berlin -</span>
<span class="t" style="left:200px;top:976.84px;font-size:11.8px;font-weight:400;font-style:normal;color:#5c5c5c;transform-origin:0 0;transform:scaleX(0.9310);">Supervisor</span>
<span class="t" style="left:294px;top:976.84px;font-size:11.8px;font-weight:400;font-style:normal;color:#5c5c5c;transform-origin:0 0;transform:scaleX(0.9717);">Verarbeitungstätigkeiten</span>
<span class="t" style="left:1727.5px;top:976.84px;font-size:11.8px;font-weight:400;font-style:normal;color:#5c5c5c;transform-origin:0 0;transform:scaleX(0.8968);">140 %</span>
<span class="t" style="left:1770px;top:976.84px;font-size:11.8px;font-weight:400;font-style:normal;color:#5c5c5c;transform-origin:0 0;transform:scaleX(1.1610);">+</span>
<span class="t" style="left:5px;top:1007.34px;font-size:11.8px;font-weight:400;font-style:normal;color:#5c5c5c;transform-origin:0 0;transform:scaleX(0.9613);">Online-Betrieb</span>
<span class="t" style="left:1760px;top:1007.34px;font-size:11.8px;font-weight:400;font-style:normal;color:#5c5c5c;transform-origin:0 0;transform:scaleX(0.8968);">100 %</span>
<span class="t" style="left:1802px;top:1007.34px;font-size:11.8px;font-weight:400;font-style:normal;color:#5c5c5c;transform-origin:0 0;transform:scaleX(1.1610);">+</span>
<span class="t" style="left:1757.93px;top:261px;font-size:15.5px;font-weight:400;font-style:normal;color:#505050;transform-origin:0 0;transform:rotate(-90deg) scaleX(1.0219);">Dokumente</span>
<span class="t" style="left:1796.84px;top:252.7px;font-size:11.8px;font-weight:400;font-style:normal;color:#505050;transform-origin:0 0;transform:rotate(-90deg) scaleX(0.9562);">Service Coordinator</span>
</body></html>
